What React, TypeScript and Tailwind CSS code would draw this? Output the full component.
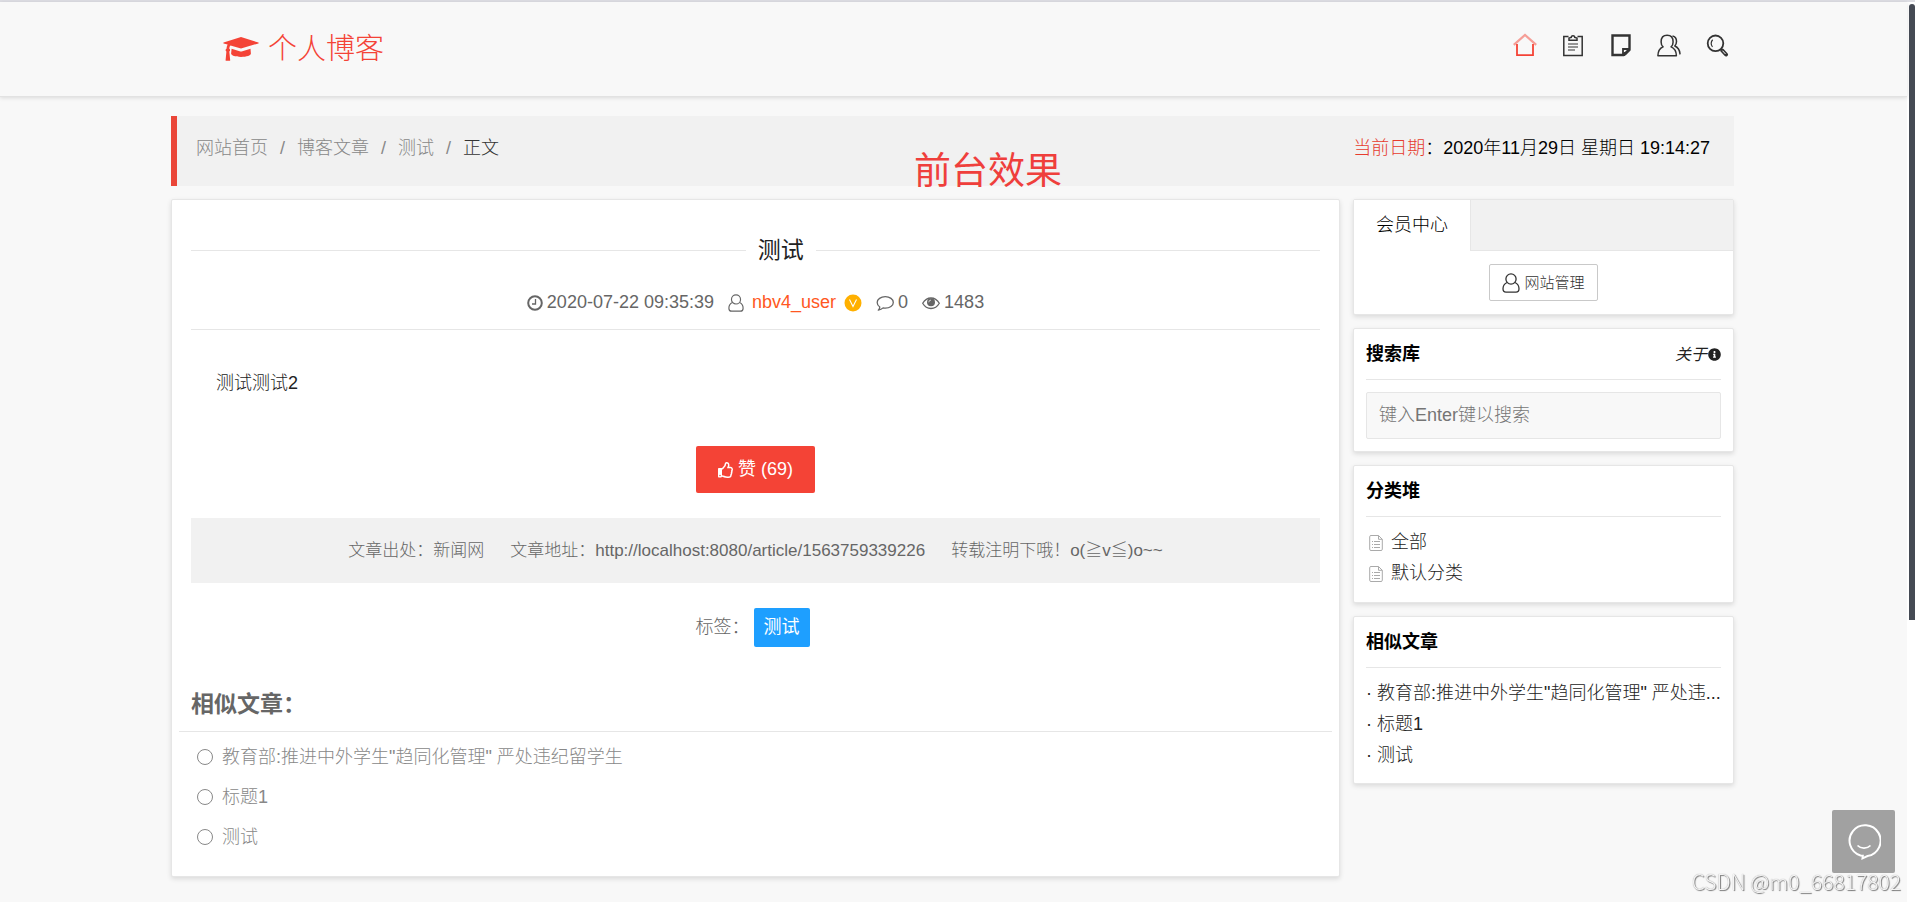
import type { ReactNode } from 'react'
import { FaInfoCircle, FaRegThumbsUp } from 'react-icons/fa'

const crumbs = ['网站首页', '博客文章', '测试']

const similar = [
  {
    id: 1,
    title: '教育部:推进中外学生"趋同化管理" 严处违纪留学生',
    short: '教育部:推进中外学生"趋同化管理" 严处违...',
  },
  { id: 2, title: '标题1', short: '标题1' },
  { id: 3, title: '测试', short: '测试' },
]

const categories = ['全部', '默认分类']

function CapIcon() {
  return (
    <svg viewBox="0 0 36 26" className="h-[26px] w-9" fill="currentColor" aria-hidden="true">
      <path d="M18 1 35.4 6.6c.4.2.4.7 0 .8L18 12.6 7.500 9.500c-.8.7-1.100 1.800-1.200 3.300.6.3.8.8.8 1.400s-.3 1.100-.8 1.400l.9 8.600c0 .4-.2.6-.6.6H3.200c-.4 0-.6-.3-.6-.6l.8-8.600c-.5-.3-.8-.8-.8-1.400 0-.6.3-1.100.9-1.400.1-1.600.4-2.900 1.100-4.200L.6 7.400c-.4-.2-.4-.6 0-.8z" />
      <path d="m8.600 12.800 8.800 2.700c.4.1.8.1 1.200 0l8.900-2.700.4 4.700c.1 1.900-4.300 3.400-9.900 3.400s-9.900-1.500-9.900-3.400z" />
    </svg>
  )
}

function HomeIcon() {
  return (
    <svg viewBox="0 0 24 24" className="size-6" fill="none" stroke="currentColor" strokeWidth="1.8" aria-hidden="true">
      <path d="M4 11v11.200h16V11" />
      <path d="M.8 11.800 12 2l11.200 9.800" strokeOpacity="0.500" strokeWidth="2.200" />
    </svg>
  )
}

function ClipboardIcon() {
  return (
    <svg viewBox="0 0 24 24" className="size-6" fill="none" stroke="currentColor" strokeWidth="1.5" aria-hidden="true">
      <path d="M7.500 3.500H2.800v19h18.400v-19h-4.700" />
      <path d="M8 7.200h8V5l-2.200-.5a1.800 1.800 0 0 0-3.600 0L8 5z" />
      <path d="M7 11h10M7 14h10M7 17h7" strokeWidth="1.100" />
    </svg>
  )
}

function NoteIcon() {
  return (
    <svg viewBox="0 0 24 24" className="size-6" fill="none" stroke="currentColor" strokeWidth="2.4" aria-hidden="true">
      <path d="M3.500 2.500h17V16l-6 6h-11z" />
      <path d="M14 22v-6h6.500" strokeWidth="1.800" />
      <path d="m13.500 22.500 1.500-3 2.500.5 1-2.500 2.500-1v1l-5 5z" fill="currentColor" strokeWidth="1" />
    </svg>
  )
}

function UsersIcon() {
  return (
    <svg viewBox="0 0 24 24" className="size-6" fill="none" stroke="currentColor" strokeWidth="1.5" strokeLinejoin="round" aria-hidden="true">
      <path d="M.9 22.800c.1-4.600 1.700-7.600 5.200-8.900-1.500-1.300-2-3-2-5 0-4 2.200-6.700 6-6.700s6 2.700 6 6.700c0 2-.6 3.700-2 5 3.400 1.300 5.200 4.300 5.300 8.900z" />
      <path d="M15.500 3c2.600.5 4 2.600 4 5.500 0 1.900-.6 3.300-1.700 4.500 3.200 1.400 4.900 4 5.200 7.800h-.8" />
    </svg>
  )
}

function SearchIcon() {
  return (
    <svg viewBox="0 0 24 24" className="size-6" fill="none" stroke="currentColor" aria-hidden="true">
      <circle cx="10.500" cy="10.300" r="7.800" strokeWidth="1.800" />
      <path d="M7.500 13.800a5 5 0 0 1 .2-7" strokeWidth="1.200" />
      <path d="m17.300 17.500 3.700 4" strokeWidth="4" strokeLinecap="round" />
      <path d="m17.500 17.700 3 3.300" stroke="#f8f8f8" strokeWidth="1" />
    </svg>
  )
}

function UserIcon({ className }: { className: string }) {
  return (
    <svg viewBox="0 0 18 20" className={className} fill="none" stroke="currentColor" strokeWidth="1.3" aria-hidden="true">
      <circle cx="9" cy="6" r="5.100" />
      <path d="M5 9.500c-2.600 1.200-4 3.600-4 6.300 0 2 1 3.400 3 3.400h10c2 0 3-1.400 3-3.400 0-2.700-1.400-5.100-4-6.300" />
    </svg>
  )
}

function ClockIcon() {
  return (
    <svg viewBox="0 0 16 16" className="size-4" fill="none" stroke="currentColor" aria-hidden="true">
      <circle cx="8" cy="8" r="6.800" strokeWidth="2" />
      <path d="M8.500 4v5H5" strokeWidth="1.300" />
    </svg>
  )
}

function VipIcon() {
  return (
    <svg viewBox="0 0 18 18" className="size-[18px]" aria-hidden="true">
      <circle cx="9" cy="9" r="8.500" fill="#ffb000" />
      <path d="m5.500 5.500 3.500 7 3.500-7" fill="none" stroke="#fff" strokeWidth="1.100" />
    </svg>
  )
}

function CommentIcon() {
  return (
    <svg viewBox="0 0 18 18" className="size-[18px]" fill="none" stroke="currentColor" strokeWidth="1.300" strokeLinejoin="round" aria-hidden="true">
      <path d="M9.300 2.700c4.500 0 8 2.500 8 5.700s-3.500 5.700-8 5.700c-.8 0-1.500-.1-2.200-.2-1.300 1.300-2.900 2-4.800 2.300.9-.9 1.400-1.800 1.500-3.200C2 11.900 1.200 10.200 1.200 8.400c0-3.200 3.600-5.700 8.100-5.700z" />
    </svg>
  )
}

function EyeIcon() {
  return (
    <svg viewBox="0 0 18 14" className="h-[14px] w-[18px]" fill="none" stroke="currentColor" aria-hidden="true">
      <path d="M.7 7.300C2.600 4 5.600 2 9 2s6.400 2 8.300 5.300C15.400 10.600 12.400 12.500 9 12.500S2.600 10.600.7 7.300z" strokeWidth="1.300" />
      <circle cx="9" cy="6.300" r="4" fill="currentColor" stroke="none" />
      <path d="M6.800 6.300A2.200 2.200 0 0 1 9 4.100" stroke="#fff" strokeWidth="0.700" />
    </svg>
  )
}

function FileIcon() {
  return (
    <svg viewBox="0 0 14 16" className="h-4 w-[14px] text-[#aaa]" fill="none" stroke="currentColor" aria-hidden="true">
      <path d="M9.500.5H2Q.7.500.7 1.800v12.400q0 1.300 1.300 1.300h10q1.300 0 1.300-1.300V4.300zv3.800h3.800" />
      <path d="M3 6.500h1M5 6.500h6M3 9.500h1M5 9.500h6M3 12.500h1M5 12.500h6" />
    </svg>
  )
}

function ChatIcon() {
  return (
    <svg viewBox="0 0 34 36" className="h-9 w-[34px]" fill="none" stroke="currentColor" strokeWidth="2" aria-hidden="true">
      <path d="M13.500 31.500A15.500 15.500 0 1 1 20.500 32L15.500 34.300l.3-2.600z" />
      <path d="M10.500 21.500c3.500 3.500 9.500 3.500 13 0" strokeWidth="1.700" />
    </svg>
  )
}

const navItems = [
  { label: '首页', icon: <HomeIcon />, active: true },
  { label: '文章', icon: <ClipboardIcon /> },
  { label: '笔记', icon: <NoteIcon /> },
  { label: '关于我', icon: <UsersIcon /> },
  { label: '搜索', icon: <SearchIcon /> },
]

function Header() {
  return (
    <header className="border-b border-[#e2e2e2] shadow-[0_1px_4px_rgba(0,0,0,0.12)]">
      <div className="mx-auto flex h-[94px] w-full max-w-[1565px] items-start justify-between pr-[7px] pl-[52px]">
        <a href="#" className="mt-[25px] flex items-center gap-[9px] text-[29px] leading-[44px] text-[#f44336]">
          <CapIcon />
          个人博客
        </a>
        <nav className="mt-[31px] flex gap-6 text-[#333]">
          {navItems.map((item) => (
            <a key={item.label} href="#" aria-label={item.label} className={item.active ? 'text-[#f44336]' : ''}>
              {item.icon}
            </a>
          ))}
        </nav>
      </div>
    </header>
  )
}

function Breadcrumb() {
  return (
    <div className="relative mt-[19px] flex h-[70px] items-start justify-between border-l-[6px] border-[#ea4639] bg-[#f1f1f1] pt-5 pr-6 pl-[19px]">
      <nav className="flex gap-3 text-[#888]">
        {crumbs.map((crumb) => (
          <span key={crumb} className="flex gap-3">
            <a href="#">{crumb}</a>
            <span>/</span>
          </span>
        ))}
        <span className="text-[#333]">正文</span>
      </nav>
      <p className="text-black">
        <span className="text-[#e63c2e]">当前日期</span>：2020年11月29日 星期日 19:14:27
      </p>
      <p className="absolute top-[34px] left-[737px] text-[37px] leading-[44px] font-normal text-[#ef3f3c]">前台效果</p>
    </div>
  )
}

function Article() {
  return (
    <main className="min-w-0 flex-1 rounded-xs border border-[#e6e6e6] bg-white px-[19px] pt-[34px] pb-[19px] shadow-[0_2px_5px_rgba(0,0,0,0.12)]">
      <div className="flex items-center gap-3">
        <span className="h-px flex-[11] bg-[#e6e6e6]" />
        <h1 className="text-[23px] leading-8 font-normal text-[#222]">测试</h1>
        <span className="h-px flex-[10] bg-[#e6e6e6]" />
      </div>

      <div className="mt-6 flex items-center justify-center gap-[14px] border-b border-[#e6e6e6] pb-[14px]">
        <span className="flex items-center gap-1">
          <ClockIcon />
          2020-07-22 09:35:39
        </span>
        <span className="flex items-center gap-2">
          <UserIcon className="h-[18px] w-4" />
          <a href="#" className="text-[#ff5722]">nbv4_user</a>
          <VipIcon />
        </span>
        <span className="flex items-center gap-1">
          <CommentIcon />
          0
        </span>
        <span className="flex items-center gap-1">
          <EyeIcon />
          1483
        </span>
      </div>

      <p className="mt-[41px] pl-[25px] text-[#222]">测试测试2</p>

      <div className="mt-[50px] flex justify-center">
        <button type="button" className="flex h-[47px] items-center gap-1 rounded-xs bg-[#f44336] px-[22px] font-normal text-white">
          <FaRegThumbsUp className="size-4" />
          赞 (69)
        </button>
      </div>

      <div className="mt-[25px] flex h-[65px] items-center justify-center gap-[26px] bg-[#f1f1f1] text-[17px]">
        <span>文章出处：新闻网</span>
        <span>文章地址：http://localhost:8080/article/1563759339226</span>
        <span>转载注明下哦！o(≧v≦)o~~</span>
      </div>

      <div className="mt-[25px] flex items-center justify-center gap-1">
        <span>标签：</span>
        <a href="#" className="mr-[6px] rounded-xs bg-[#1e9fff] px-[10px] py-[7px] font-normal text-white">测试</a>
      </div>

      <h2 className="mt-[41px] text-[23px] leading-8 font-bold">相似文章：</h2>
      <ul className="-mx-3 mt-[11px] border-t border-[#e6e6e6] pt-[5px] pl-[18px] text-[#888]">
        {similar.map((item) => (
          <li key={item.id}>
            <a href="#" className="flex items-center gap-[9px] leading-[40px]">
              <span className="size-4 rounded-full border border-current" />
              {item.title}
            </a>
          </li>
        ))}
      </ul>
    </main>
  )
}

function Card({ title, extra, children }: { title: string; extra?: ReactNode; children: ReactNode }) {
  return (
    <section className="rounded-xs border border-[#e6e6e6] bg-white px-3 pb-3 shadow-[0_2px_5px_rgba(0,0,0,0.12)]">
      <div className="mb-[10px] flex h-[51px] items-center justify-between border-b border-[#e6e6e6] pt-px">
        <h2 className="font-bold text-black">{title}</h2>
        {extra}
      </div>
      {children}
    </section>
  )
}

function Sidebar() {
  return (
    <aside className="flex w-[381px] flex-col gap-[13px] text-[#222]">
      <section className="rounded-xs border border-[#e6e6e6] bg-white shadow-[0_2px_5px_rgba(0,0,0,0.12)]">
        <div className="flex h-[51px] bg-[#f1f1f1]">
          <button type="button" className="border-r border-[#e6e6e6] bg-white px-[22px] text-black">会员中心</button>
          <span className="flex-1 border-b border-[#e6e6e6]" />
        </div>
        <div className="flex justify-center py-[13px]">
          <button type="button" className="flex h-[37px] items-center gap-1 rounded-xs border border-[#c9c9c9] px-3 text-[15px] text-[#333]">
            <UserIcon className="h-5 w-[18px]" />
            网站管理
          </button>
        </div>
      </section>

      <Card
        title="搜索库"
        extra={
          <a href="#" className="flex items-center gap-px text-[16px] font-normal italic">
            关于
            <FaInfoCircle className="size-[13px]" />
          </a>
        }
      >
        <input
          type="text"
          aria-label="搜索"
          placeholder="键入Enter键以搜索"
          className="mt-[2px] h-[47px] w-full rounded-xs border border-[#e6e6e6] bg-[#f8f8f8] px-3 placeholder:text-[#757575]"
        />
      </Card>

      <Card title="分类堆">
        <ul className="pb-px pl-[3px]">
          {categories.map((name) => (
            <li key={name}>
              <a href="#" className="flex items-center gap-2 leading-[31px]">
                <FileIcon />
                {name}
              </a>
            </li>
          ))}
        </ul>
      </Card>

      <Card title="相似文章">
        <ul>
          {similar.map((item) => (
            <li key={item.id}>
              <a href="#" title={item.title} className="block leading-[31px] whitespace-nowrap">· {item.short}</a>
            </li>
          ))}
        </ul>
      </Card>
    </aside>
  )
}

export default function App() {
  return (
    <div className="flex min-h-screen bg-white font-['Liberation_Sans','Noto_Sans_CJK_SC',sans-serif] text-[18px] leading-[25px] font-light text-[#666]">
      <div className="min-w-0 flex-1 border-t-2 border-[#dddde3] bg-[#f8f8f8]">
        <Header />
        <div className="mx-auto w-full max-w-[1565px] pr-[2px] pb-6">
          <Breadcrumb />
          <div className="mt-[13px] flex items-start gap-[13px]">
            <Article />
            <Sidebar />
          </div>
        </div>
      </div>
      <div className="w-2 border-t-2 border-[#dddde3] pt-[2px] pl-[2px]">
        <div className="h-[616px] rounded-t-sm bg-[#454a54]" />
      </div>

      <button type="button" aria-label="在线客服" className="fixed right-5 bottom-[29px] flex size-[63px] items-center justify-center rounded-xs bg-[#a1a1a1] text-white">
        <ChatIcon />
      </button>
      <p className="fixed right-[14px] bottom-[9px] font-['Noto_Sans_CJK_SC',sans-serif] text-[21px] leading-6 text-[#f4f4f4] [text-shadow:1px_1px_1px_#777,0_0_1px_#999]">
        CSDN @m0_66817802
      </p>
    </div>
  )
}
